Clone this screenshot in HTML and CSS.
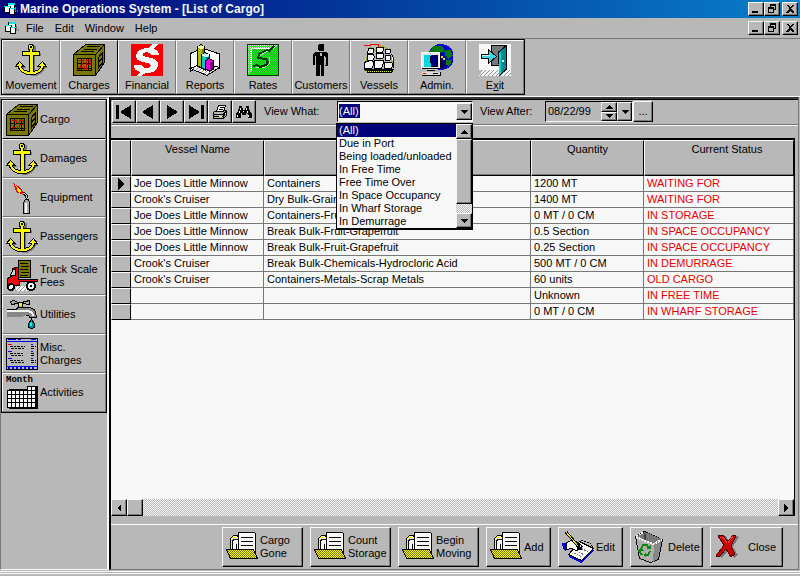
FILE: index.html
```html
<!DOCTYPE html>
<html lang="en">
<head>
<meta charset="utf-8">
<title>Marine Operations System</title>
<link rel="stylesheet" href="styles.css">
</head>
<body>
<svg class="sprites" aria-hidden="true">
  <defs>
    <pattern id="dither-yellow" width="2" height="2" patternUnits="userSpaceOnUse">
      <rect width="2" height="2" fill="#f8f800"/><path d="M0 0h1v1h-1zM1 1h1v1h-1z" fill="#787800"/>
    </pattern>
    <pattern id="dither-cream" width="2" height="2" patternUnits="userSpaceOnUse">
      <rect width="2" height="2" fill="#f8f8f8"/><path d="M0 0h1v1h-1zM1 1h1v1h-1z" fill="#f8f800"/>
    </pattern>
    <pattern id="dither-green" width="2" height="2" patternUnits="userSpaceOnUse">
      <rect width="2" height="2" fill="#00f800"/><path d="M0 0h1v1h-1zM1 1h1v1h-1z" fill="#28a828"/>
    </pattern>
    <pattern id="dither-pale" width="2" height="2" patternUnits="userSpaceOnUse">
      <rect width="2" height="2" fill="#00f800"/><path d="M0 0h1v1h-1zM1 1h1v1h-1z" fill="#d8d8d8"/>
    </pattern>
    <pattern id="dither-white" width="4" height="4" patternUnits="userSpaceOnUse">
      <rect width="4" height="4" fill="#f8f8f8"/><path d="M0 0h1v1h-1zM2 2h1v1h-1zM3 1h1v1h-1zM1 3h1v1h-1z" fill="#909090"/>
    </pattern>
  </defs>
  <symbol id="app" viewBox="0 0 16 16">
    <path d="M4.500 2.500h7v7h-7z" fill="#f8f8f8" stroke="#000"/><path d="M5 2h7v2H5z" fill="#00e8e8"/>
    <path d="M1.500 5.500h6v6h-6z" fill="#f8f8f8" stroke="#000"/><path d="M1 5h6v1H1z" fill="#00e8e8"/>
    <path d="M6.500 7.500h5v6h-5z" fill="#f8f8f8" stroke="#000"/><path d="M7 7h5v1H7z" fill="#00e8e8"/><path d="M12 6h1v5h-1zM14 9h1v2h-1z" fill="#787878"/>
  </symbol>
  <symbol id="anchor" viewBox="0 0 32 32">
    <path transform="translate(2 1)" fill="#787878" d="M14 5V1h5v5h-1v2h6v3h-6v17c4 0 7-2 7-5h-3l5-5 3 5h-2c-1 4-6 8-11 8S5 27 4 23H1l4-5 4 5H7c0 3 4 5 7 5V11H8V8h6z"/>
    <path fill="#f8f800" stroke="#000" d="M14 5.500L13 4.500V2L14.500 .5H17L18.500 2v2.500L17.500 5.500V7.500H24.500V11H18V27.500C22 27 25 25 25.500 22.500H22.500L27.500 17.500L31.500 22.500H29C28 27 22 31 16 31S4 27 3 22.500H.5L4.500 17.500L9 22.500H6.500C7 25 10 27 14 27.500V11H7.500V7.500H14z"/>
    <path d="M15 2h2v2h-2z" fill="#000"/>
  </symbol>
  <symbol id="crate" viewBox="0 0 32 32">
    <path fill="#787800" stroke="#000" d="M.5 10.500L12.500 .5H31.500V18.500L22.500 31.500H.5zM.5 10.500H22.500V31.500M22.500 10.500L31.500 .5"/>
    <path fill="#787800" stroke="#000" d="M4.500 14.500h14v12h-14z"/>
    <path stroke="#000" fill="none" d="M8 7.500h13M14 2.500h13M11 5.500h13M25 12.500v12M29 7.500v12M25 14l5-6M25 19l5-6M25 24l5-6"/>
    <path stroke="#000" d="M8.500 15v11M15.500 15v11M5 19.500h13M5 24.500h13"/>
    <path stroke="#c80000" fill="none" d="M6 16.500h5M10.500 17v2M9.500 19v2M7.500 21v2M6 23.500h4M13.500 15v11M17.500 16v5M13 16.500h4M14 20.500h4M5 25.500h2M11.500 22v4"/>
  </symbol>
  <symbol id="money" viewBox="0 0 32 32">
    <path fill="#f80000" d="M0 0h32v32H0z"/>
    <path fill="#f8f8f8" d="M22 0h5l-4 5c3 1 5 3 5 6h-8c0-3-7-4-8-1-1 2 3 3 8 4 5 1 8 4 7 8-1 5-6 7-12 7l-5 3H5l4-4c-4-1-6-3-6-7h8c0 4 8 4 9 1 0-2-3-3-8-4-5-1-8-3-7-7 1-4 5-7 12-7z"/>
  </symbol>
  <symbol id="report" viewBox="0 0 32 32">
    <path fill="#f8f8f8" stroke="#000" d="M1.500 9.500L13 4v18L1.500 27zM13 4L30.500 10v14L13 20z"/>
    <path fill="url(#dither-white)" stroke="#000" d="M1.500 24.500L13 19l17.500 4.500L18 31.500z"/>
    <path fill="#b8b800" stroke="#000" d="M8.500 3v19l3 1.500 4-1.500V3L12 .5z"/><path fill="#f8f8a0" d="M9 2h6v2l-3 1-3-1z"/><path d="M13 5h2v17h-2z" fill="#787800"/>
    <path fill="#00c8c8" stroke="#000" d="M12.500 11v13l4 2 4-2V11L16 8.500z"/><path fill="#c8f8f8" d="M13 10h7v2l-3 1-4-1z"/><path d="M17 13h3v11h-3z" fill="#007878"/>
    <path fill="#e800e8" stroke="#000" d="M16.500 17v8l4 2 4-2v-8L20 14.500z"/><path d="M21 18h3v7h-3z" fill="#780078"/>
  </symbol>
  <symbol id="rates" viewBox="0 0 32 32">
    <path fill="url(#dither-green)" stroke="#003800" d="M.5 .5h31v31H.5z"/>
    <path fill="url(#dither-pale)" d="M1 1h30l-4 4H5v22l-4 4z"/>
    <path fill="none" stroke="#f8f8f8" d="M4.500 27V4.500H26"/>
    <path fill="none" stroke="#b8e8b8" d="M9 23h9l4-3 1-7M12 12l9-5"/>
    <path fill="none" stroke="#003800" stroke-width="2" d="M6 22l4-1 3 2 6-2 2-3-2-3-8-1 1-4 8-4 2 1 5-5"/>
  </symbol>
  <symbol id="person" viewBox="0 0 32 32">
    <path d="M13 1l1-1h4l1 1v5l-1 1h-4l-1-1zM11 8h10l2 2v12h-3V12h-1v20h-3V21h-1v11h-4V12h-1v9H8V10z"/>
    <path fill="#b8b8b8" d="M15 9h2l-1 6zM10 13h1v8h-1zM20 13h1v8h-1z"/>
  </symbol>
  <symbol id="ship" viewBox="0 0 32 32">
    <path fill="none" stroke="#a8a800" d="M1 24L7 3l6 4 3-6 9 4 6 18M2 26h28M8 3v22M17 2v23M26 4v21"/>
    <path fill="none" stroke="#e80000" d="M1 1.500h7M7 .5h8v2"/>
    <path fill="#f8f8f8" stroke="#000" d="M5.500 4.500h5c1 2 0 4-1 5h-5zM4.500 10.500h6c1 2 1 5-1 6h-5zM1.500 18.500c3-2 8-2 9-1 0 3 0 5-2 7h-7zM13.500 3.500h7c0 2 0 3-1 5h-6zM13.500 9.500h7c1 2 0 4-1 5h-6zM11.500 16.500h9c0 4-1 6-2 8h-7zM22.500 5.500h5c1 2 0 3-1 4h-4zM22.500 11.500h5c1 2 0 4-1 5h-4zM21.500 18.500h7c2 2 1 4 0 6h-7zM28.500 10l2 4v10"/>
    <path fill="#000" d="M0 25h31l-1 3-3 1H4z"/><path stroke="#f8f800" stroke-dasharray="1 1" d="M3 27.500h25"/>
  </symbol>
  <symbol id="admin" viewBox="0 0 32 32">
    <circle cx="20" cy="13" r="13" fill="#0000d8"/><path fill="#000078" d="M15 14h8l4 5-3 6-8-1z"/>
    <path fill="#087808" d="M12 2h8l3 2 1 4h-4l-4 5-5-4H8zM24 7l5-2 3 7-5 3-3-3zM25 16h6l-2 6-4-1z"/><path fill="#e8e800" d="M20 12h2v2h2v2h-2v-2h-2z"/>
    <path fill="#e8e8e8" stroke="#f8f8f8" d="M.5 8.500h18v16H.5z"/><path fill="#000" d="M3 11h14v12H3zM19 9h1v16H1v-1h18z"/><path fill="#00d8e8" d="M3 11h7l-1 3 1 9H3z"/><path fill="#000078" d="M10 11h6v11h-6z"/>
    <path fill="#d8d8d8" d="M6 25h8v2H6zM1 28h18v3H1z"/><path fill="#000" d="M6 26h8v1H6zM1 31h19v1H1zM19 28h1v4h-1zM12 29h5v1h-5z"/><path fill="#f80000" d="M2 29h3v1H2z"/>
  </symbol>
  <symbol id="exit" viewBox="0 0 32 32">
    <path fill="#f8f8f8" d="M0 0h32v26H0z"/><path fill="url(#dither-white)" d="M4 26h28v6H0z"/><path fill="#787878" stroke="#000" d="M12.500 1.500h15v20h-15z"/>
    <path fill="#008890" stroke="#000" d="M19.500 8L27.500 1.500V25L20.500 31.500z"/><path fill="#00d8d8" d="M20 9l2-2v22l-2 2z"/><path fill="#f8f8f8" d="M23 16h2v2h-2z"/>
    <path fill="#38d8e8" stroke="#000" d="M2.500 10.500h7v-5l8 7-8 7v-5h-7z"/><path fill="#d0f8f8" d="M3 11h8v1H3z"/>
  </symbol>
  <symbol id="torch" viewBox="0 0 32 32">
    <path fill="#f80000" d="M7 1l5 3 3 2 3 5-3 1-5-2-1-4z"/><path fill="#f8f800" d="M9 3l4 3 2 3-1 2-3-2v-3z"/>
    <path fill="none" stroke="#000" stroke-width="3" d="M17 11c5 2 4 5 4 8"/><path fill="none" stroke="#d8d8d8" d="M17 11c5 2 4 5 4 8"/>
    <path fill="#a8a8a8" stroke="#000" d="M19.500 17.500h3l1 3v11h-6v-11z"/><path fill="#f8f8f8" d="M19 21h2v10h-2z"/>
  </symbol>
  <symbol id="truck" viewBox="0 0 32 32">
    <path fill="url(#dither-white)" d="M9 26h12v5H11z"/>
    <path fill="#787800" stroke="#000" d="M12.500 .5h12v17h-12z"/><path stroke="#000" d="M14 3.500h8M15 6.500h8M14 9.500h8M15 12.500h8M14 15.500h8"/>
    <path fill="#f80000" stroke="#000" d="M6.500 9l3-2h3v12.500h19v2H13v4H1.500v-7l4-2z"/><path fill="#b8d8d8" stroke="#000" d="M6.500 10.500l3-2v7h-5z"/>
    <circle cx="25" cy="26" r="4" fill="#f8f8f8" stroke="#000" stroke-width="2"/><circle cx="5" cy="27" r="3" fill="#f8f8f8" stroke="#000" stroke-width="2"/><path d="M24 25h2v2h-2z"/>
  </symbol>
  <symbol id="tap" viewBox="0 0 32 32">
    <path fill="#a8a8a8" stroke="#000" d="M4.500 2.500l3-1 5 2h3l8-2v4l-7-1h-5l-6 1zM12.500 5.500h4v4h-4z"/><path fill="#f8f800" d="M13 4h3v3h-3z"/>
    <path fill="#888" d="M1 10h10l2-2h8c5 0 9 3 9 7v3h-6c0-2-2-2-4-2-3 2-7 3-10 2H1z"/><path fill="none" stroke="#000" d="M1 10.500h9l2-2h9c5 0 9 2 9 7v3h-6c0-2-2-2-4-2"/><path fill="#f8f8f8" d="M1 11h20c5 0 7 3 7 6h-2c0-3-2-4-6-4H1z"/>
    <path fill="#008890" stroke="#000" d="M25.500 20l3 5v3l-2 1.500h-2l-2-1.500v-3z"/><path fill="#00f8f8" d="M25 23h1v4h-2v-2z"/>
  </symbol>
  <symbol id="ledger" viewBox="0 0 32 32">
    <path fill="#b8b8b8" stroke="#000" d="M.5 .5h31v31H.5z"/><path stroke="#0000d8" d="M2 1.500h28" stroke-dasharray="8 2 3 10"/><path stroke="#0000e8" d="M1 3.500h30M1 28.500h30"/><path stroke="#0000e8" stroke-width="2" stroke-dasharray="2 2" d="M2 30h28"/>
    <path stroke="#000" stroke-dasharray="3 1 2 1" d="M4 8.500h15M25 8.500h5M5 10.500h13M25 10.500h4M4 15.500h14M25 15.500h4M5 17.500h12M25 17.500h4M4 22.500h14M25 22.500h5M5 24.500h14M25 24.500h5"/><path stroke="#e80000" d="M2 6.500h4"/><path stroke="#0000e8" d="M2 13.500h4M2 20.500h4M25 6.500h2M25 13.500h2M25 20.500h2"/>
  </symbol>
  <symbol id="calendar" viewBox="0 0 32 32">
    <path fill="#000" d="M3 12h20V9h9v23H3z"/><path fill="#f8f8f8" stroke="#000" d="M1.500 13.500h20v-4h8v21h-28z"/>
    <path stroke="#000" d="M5.500 14v16M9.500 14v16M13.500 14v16M17.500 14v16M21.500 10v20M25.500 10v20M2 17.500h27M2 21.500h27M2 25.500h27M22 13.500h7"/>
  </symbol>
  <symbol id="folder" viewBox="0 0 32 32">
    <path fill="url(#dither-cream)" stroke="#000" d="M4.500 20V7.500l3-3h4l1 2h17v21"/>
    <path fill="#f8f8f8" stroke="#000" d="M6.500 19V9.500l2-1h6V19z"/><path d="M10 13h1v5h-1z"/>
    <path fill="#f8f8f8" stroke="#000" d="M12.500 19V1.500H28.500L29.500 2.500V20"/><path stroke="#000" d="M15 6.500h12M15 10.500h12M15 14.500h12"/>
    <path fill="url(#dither-yellow)" stroke="#000" d="M.5 18.500H27.500L31.500 27.500H4.500z"/>
  </symbol>
  <symbol id="edit" viewBox="0 0 32 32">
    <path fill="none" stroke="#0000d8" stroke-width="2" d="M7 25l12 6 12-12"/>
    <path fill="#f8f8f8" stroke="#000" d="M17.500 10.500l14 7-12 12-13-6z"/>
    <path fill="none" stroke="#787878" stroke-dasharray="2 1" d="M17 16l9 5M14 19l8 5M12 22l8 4"/>
    <path fill="none" stroke="#000" stroke-dasharray="2 1" d="M19 9l9 3 3 5"/><path fill="#0000d8" d="M0 12h4v8l-3-2z"/>
    <path fill="#f8f8f8" stroke="#000" d="M4.500 11.500l5-2 5 1 6 5-2 1-4-1 2 3-2 1-5-2-5 1z"/>
    <path fill="none" stroke="#000" stroke-width="3" d="M4 1l13 15 2 3"/><path fill="none" stroke="#e8d800" d="M4 1l12 14"/>
  </symbol>
  <symbol id="bin" viewBox="0 0 32 32">
    <path fill="#b0b0b0" stroke="#000" d="M1.500 5.500l9-5 18 8-4 20-8 3-11-4z"/><path fill="#787878" d="M3 5l8-4 17 7-9 5z"/><path fill="#404040" d="M10 2l2 1v8l-2-2z"/><path fill="#888" d="M20 13l8-4-4 19-5 3z"/>
    <path fill="none" stroke="#f8f8f8" stroke-width="2" stroke-dasharray="2 1" d="M2 5l8-4M2 6l17 7 9-4"/>
    <path fill="none" stroke="#088808" stroke-width="2" d="M7 18l2-4h4l2 4M16 20l-2 4h-3M8 24l-3-4 1-2"/><path fill="#088808" d="M12 18h5v-4zM12 21v6l-3-3zM4 20h6l-3-4z"/>
  </symbol>
  <symbol id="cross" viewBox="0 0 32 32">
    <path transform="translate(2 1)" fill="#787878" d="M4 5l6-1 4 7 6-7 3 1-6 10 5 8-4 3-5-8-7 8-3-1 8-11z"/>
    <path fill="#c80000" stroke="#580000" d="M4 5l5-1 5 7 5-7 3 1-5 10 4 8-4 3-5-8-7 8-3-1 8-11z"/><path fill="none" stroke="#f83838" d="M6 6h3l4 6M14 12l5-7"/>
  </symbol>
  <symbol id="printer" viewBox="0 0 16 16">
    <path fill="#b8b8b8" stroke="#000" d="M1.500 8.500l3-2h10v5l-3 3h-10z"/><path fill="#f8f8f8" stroke="#000" d="M6.500 1.500h7l-2 6h-7z"/><path stroke="#000" d="M8 3.500h4M7 5.500h4M2 10.500h9M11.500 14v-4l3-3M2 12.500h9"/><path fill="#f8f800" d="M7 12h3v1H7z"/>
  </symbol>
  <symbol id="binoculars" viewBox="0 0 16 16">
    <path d="M3 2h3v2h1v2h2V4h1V2h3v2l1 3 2 3v4h-4v-4h-1V9h-1v2H6V9H5v5H0v-4l2-3 1-3z"/><path stroke="#f8f8f8" d="M4.500 4v2M3.500 7v2M1.500 11v2M10.500 4v2M11.500 7v2M12.500 11v2M7.500 7v1"/>
  </symbol>
  <symbol id="first" viewBox="0 0 16 16"><path d="M0 1h3v14H0zM15 1v14L4 8z"/></symbol>
  <symbol id="prev" viewBox="0 0 16 16"><path d="M13 1v14L2 8z"/></symbol>
  <symbol id="next" viewBox="0 0 16 16"><path d="M3 1v14L14 8z"/></symbol>
  <symbol id="last" viewBox="0 0 16 16"><path d="M1 1v14L12 8zM13 1h3v14h-3z"/></symbol>
  <symbol id="min" viewBox="0 0 10 10"><path d="M1 7h6v2H1z"/></symbol>
  <symbol id="restore" viewBox="0 0 10 10"><path d="M3 0h6v6H7V5h1V2H4v1H3zM1 3h6v6H1zM2 5v3h4V5z" fill-rule="evenodd"/></symbol>
  <symbol id="shut" viewBox="0 0 10 10"><path d="M1 1h2l2 2 2-2h2L6 4v1l3 3v1H7L5 7 3 9H1V8l3-3V4L1 1z"/></symbol>
  <symbol id="up" viewBox="0 0 8 8"><path d="M4 2h0l4 4H0z"/></symbol>
  <symbol id="down" viewBox="0 0 8 8"><path d="M0 2h8L4 6z"/></symbol>
  <symbol id="left" viewBox="0 0 8 8"><path d="M6 0v8L2 4z"/></symbol>
  <symbol id="right" viewBox="0 0 8 8"><path d="M2 0v8l4-4z"/></symbol>
</svg>

<header>
  <div class="titlebar">
    <svg class="i16"><use href="#app"/></svg>
    <h1>Marine Operations System - [List of Cargo]</h1>
    <div class="winbtns">
      <button aria-label="Minimize"><svg class="i10"><use href="#min"/></svg></button>
      <button aria-label="Restore"><svg class="i10"><use href="#restore"/></svg></button>
      <button aria-label="Close window"><svg class="i10"><use href="#shut"/></svg></button>
    </div>
  </div>
  <div class="menubar">
    <svg class="i16"><use href="#app"/></svg>
    <nav class="menus"><a href="#file">File</a><a href="#edit-menu">Edit</a><a href="#window">Window</a><a href="#help">Help</a></nav>
    <div class="winbtns">
      <button aria-label="Minimize list"><svg class="i10"><use href="#min"/></svg></button>
      <button aria-label="Restore list"><svg class="i10"><use href="#restore"/></svg></button>
      <button aria-label="Close list"><svg class="i10"><use href="#shut"/></svg></button>
    </div>
  </div>
  <div class="toolbar">
    <div class="tools">
      <button><svg class="i32"><use href="#anchor"/></svg>Movement</button>
      <button class="group-end"><svg class="i32"><use href="#crate"/></svg>Charges</button>
      <button><svg class="i32"><use href="#money"/></svg>Financial</button>
      <button><svg class="i32"><use href="#report"/></svg>Reports</button>
      <button><svg class="i32"><use href="#rates"/></svg>Rates</button>
      <button><svg class="i32"><use href="#person"/></svg>Customers</button>
      <button><svg class="i32"><use href="#ship"/></svg>Vessels</button>
      <button><svg class="i32"><use href="#admin"/></svg>Admin.</button>
      <button><svg class="i32"><use href="#exit"/></svg><span>E<u>x</u>it</span></button>
    </div>
  </div>
</header>

<div class="workspace">
  <aside class="sidebar">
    <div class="side-list">
      <button class="current"><svg class="i32"><use href="#crate"/></svg>Cargo</button>
      <button><svg class="i32"><use href="#anchor"/></svg>Damages</button>
      <button><svg class="i32"><use href="#torch"/></svg>Equipment</button>
      <button><svg class="i32"><use href="#anchor"/></svg>Passengers</button>
      <button><svg class="i32"><use href="#truck"/></svg><span>Truck Scale<br>Fees</span></button>
      <button><svg class="i32"><use href="#tap"/></svg>Utilities</button>
      <button><svg class="i32"><use href="#ledger"/></svg><span>Misc.<br>Charges</span></button>
      <button><span class="month"><svg class="i32"><use href="#calendar"/></svg><small>Month</small></span>Activities</button>
    </div>
  </aside>

  <main class="panel">
    <div class="navbar">
      <div class="records">
        <button aria-label="First"><svg class="i16"><use href="#first"/></svg></button>
        <button aria-label="Previous"><svg class="i16"><use href="#prev"/></svg></button>
        <button aria-label="Next"><svg class="i16"><use href="#next"/></svg></button>
        <button aria-label="Last"><svg class="i16"><use href="#last"/></svg></button>
        <button aria-label="Print"><svg class="i16"><use href="#printer"/></svg></button>
        <button aria-label="Find"><svg class="i16"><use href="#binoculars"/></svg></button>
      </div>
      <label class="lbl-what" for="what">View What:</label>
      <div class="combo">
        <select id="what"><option>(All)</option><option>Due in Port</option><option>Being loaded/unloaded</option><option>In Free Time</option><option>Free Time Over</option><option>In Space Occupancy</option><option>In Wharf Storage</option><option>In Demurrage</option></select>
        <span class="arrow raised"><svg class="i8"><use href="#down"/></svg></span>
        <div class="popup">
          <ul role="listbox" aria-label="View What">
            <li role="option" aria-selected="true">(All)</li><li role="option">Due in Port</li><li role="option">Being loaded/unloaded</li><li role="option">In Free Time</li><li role="option">Free Time Over</li><li role="option">In Space Occupancy</li><li role="option">In Wharf Storage</li><li role="option">In Demurrage</li>
          </ul>
          <div class="vscroll">
            <button class="raised" aria-label="Scroll up"><svg class="i8"><use href="#up"/></svg></button>
            <span class="thumb raised"></span>
            <button class="raised" aria-label="Scroll down"><svg class="i8"><use href="#down"/></svg></button>
          </div>
        </div>
      </div>
      <label class="lbl-after" for="after">View After:</label>
      <div class="datebox">
        <input id="after" type="text" value="08/22/99">
        <div class="spin">
          <button class="raised" aria-label="Later"><svg class="i8"><use href="#up"/></svg></button>
          <button class="raised" aria-label="Earlier"><svg class="i8"><use href="#down"/></svg></button>
        </div>
        <button class="drop raised" aria-label="Open calendar"><svg class="i8"><use href="#down"/></svg></button>
      </div>
      <button class="more raised">...</button>
    </div>

    <div class="gridbox">
      <table>
        <colgroup><col class="c-mark"><col class="c-vessel"><col class="c-cargo"><col class="c-qty"><col></colgroup>
        <thead><tr><th></th><th>Vessel Name</th><th></th><th>Quantity</th><th class="status-head">Current Status</th></tr></thead>
        <tbody>
          <tr><th><svg class="i12"><use href="#right"/></svg></th><td>Joe Does Little Minnow</td><td>Containers</td><td>1200 MT</td><td>WAITING FOR</td></tr>
          <tr><th></th><td>Crook's Cruiser</td><td>Dry Bulk-Grain</td><td>1400 MT</td><td>WAITING FOR</td></tr>
          <tr><th></th><td>Joe Does Little Minnow</td><td>Containers-Fruit</td><td>0 MT / 0 CM</td><td>IN STORAGE</td></tr>
          <tr><th></th><td>Joe Does Little Minnow</td><td>Break Bulk-Fruit-Grapefruit</td><td>0.5 Section</td><td>IN SPACE OCCUPANCY</td></tr>
          <tr><th></th><td>Joe Does Little Minnow</td><td>Break Bulk-Fruit-Grapefruit</td><td>0.25 Section</td><td>IN SPACE OCCUPANCY</td></tr>
          <tr><th></th><td>Crook's Cruiser</td><td>Break Bulk-Chemicals-Hydrocloric Acid</td><td>500 MT / 0 CM</td><td>IN DEMURRAGE</td></tr>
          <tr><th></th><td>Crook's Cruiser</td><td>Containers-Metals-Scrap Metals</td><td>60 units</td><td>OLD CARGO</td></tr>
          <tr><th></th><td></td><td></td><td>Unknown</td><td>IN FREE TIME</td></tr>
          <tr><th></th><td></td><td></td><td>0 MT / 0 CM</td><td>IN WHARF STORAGE</td></tr>
        </tbody>
      </table>
      <div class="hscroll">
        <button class="raised" aria-label="Scroll left"><svg class="i8"><use href="#left"/></svg></button>
        <span class="thumb raised"></span>
        <button class="raised end" aria-label="Scroll right"><svg class="i8"><use href="#right"/></svg></button>
      </div>
    </div>

    <div class="actions">
      <button class="wide"><svg class="i32"><use href="#folder"/></svg><span>Cargo<br>Gone</span></button>
      <button class="wide"><svg class="i32"><use href="#folder"/></svg><span>Count<br>Storage</span></button>
      <button class="wide"><svg class="i32"><use href="#folder"/></svg><span>Begin<br>Moving</span></button>
      <button class="small"><svg class="i32"><use href="#folder"/></svg>Add</button>
      <button class="small"><svg class="i32"><use href="#edit"/></svg>Edit</button>
      <button class="mid"><svg class="i32"><use href="#bin"/></svg>Delete</button>
      <button class="mid"><svg class="i32"><use href="#cross"/></svg>Close</button>
    </div>
  </main>
</div>
<footer></footer>
</body>
</html>
```
FILE: styles.css
```css
:root {
  --face: #b8b8b8;
  --light: #f8f8f8;
  --shade: #787878;
  --navy: #000078;
}

* { box-sizing: border-box; }

body {
  margin: 0;
  min-height: 100vh;
  display: flex;
  flex-direction: column;
  background: var(--face);
  color: #000;
  font: 11px/13px "Liberation Sans", Arial, sans-serif;
}

button, input, select { font: inherit; color: inherit; margin: 0; }
button { padding: 0; border: 0; background: var(--face); display: flex; align-items: center; }

svg { display: block; flex: none; shape-rendering: crispEdges; }
.sprites { position: absolute; width: 0; height: 0; }
.i8 { width: 8px; height: 8px; }
.i10 { width: 10px; height: 10px; }
.i12 { width: 12px; height: 12px; }
.i16 { width: 16px; height: 16px; }
.i32 { width: 32px; height: 32px; }

.raised {
  background: var(--face);
  border: 1px solid;
  border-color: var(--light) #000 #000 var(--light);
  box-shadow: inset -1px -1px var(--shade);
  display: flex;
  align-items: center;
  justify-content: center;
}

/* Title and menu */
.titlebar {
  display: flex;
  align-items: center;
  height: 18px;
  padding: 0 2px 0 3px;
  gap: 1px;
  background: linear-gradient(90deg, #000078, #0880c8);
  color: var(--light);
}
h1 { margin: 0; font-size: 12px; line-height: 16px; font-weight: bold; }
.winbtns { margin-left: auto; display: flex; }
.winbtns button {
  width: 16px;
  height: 14px;
  justify-content: center;
  border: 1px solid;
  border-color: var(--light) #000 #000 var(--light);
  box-shadow: inset -1px -1px var(--shade);
}
.winbtns button:last-child { margin-left: 2px; }
.menubar { display: flex; align-items: center; height: 20px; padding: 0 2px 0 4px; gap: 6px; }
.menus { display: flex; gap: 11px; }
.menus a { color: inherit; text-decoration: none; }

/* Main toolbar */
.toolbar {
  border-top: 1px solid var(--shade);
  border-bottom: 1px solid var(--light);
  padding-bottom: 1px;
}
.tools {
  display: flex;
  width: max-content;
  margin-left: 1px;
  border: 1px solid #000;
}
.tools button {
  width: 58px;
  height: 54px;
  padding-top: 2px;
  flex-direction: column;
  justify-content: center;
  gap: 3px;
  border: 1px solid;
  border-color: var(--light) var(--shade) var(--shade) var(--light);
}
.tools .group-end { border-right-color: #000; }

/* Sidebar */
.workspace { flex: 1; display: flex; }
.sidebar {
  flex: none;
  width: 109px;
  padding-top: 1px;
  border: 1px solid;
  border-color: var(--shade) var(--light) var(--light) var(--shade);
  border-right-width: 2px;
}
.side-list { border: 1px solid #000; }
.side-list button {
  width: 100%;
  height: 39px;
  padding-left: 3px;
  gap: 2px;
  text-align: left;
  border: 1px solid;
  border-color: var(--light) var(--shade) var(--shade) var(--light);
}
.side-list .current { border-bottom-color: #000; }
.month { position: relative; }
.month small {
  position: absolute;
  top: -1px;
  left: 0;
  font: bold 9px/9px "Liberation Mono", monospace;
}

/* Working panel */
.panel {
  flex: 1;
  min-width: 0;
  display: flex;
  flex-direction: column;
  margin-right: 1px;
  border: 1px solid var(--shade);
  border-top: 2px solid #383838;
  border-left: 2px solid #000;
}
.navbar {
  display: flex;
  align-items: center;
  height: 27px;
  padding: 0 0 2px 1px;
  border-top: 1px solid #000;
  border-bottom: 1px solid var(--light);
  box-shadow: inset 0 -1px var(--shade);
}
.records { display: flex; }
.records button {
  width: 24px;
  height: 23px;
  justify-content: center;
  border: 1px solid;
  border-color: var(--light) #000 #000 var(--light);
  box-shadow: inset -1px -1px var(--shade);
}
.lbl-what { margin-left: 8px; width: 73px; }
.combo { position: relative; width: 136px; height: 21px; display: flex; }
.combo select {
  appearance: none;
  width: 100%;
  padding: 0 18px 0 1px;
  border: 1px solid;
  border-color: #000 var(--light) var(--light) #000;
  border-radius: 0;
  background: linear-gradient(var(--navy), var(--navy)) 1px 2px / 21px 14px no-repeat var(--light);
  color: var(--light);
}
.arrow { position: absolute; right: 1px; top: 2px; width: 16px; height: 17px; pointer-events: none; }
.popup {
  position: absolute;
  z-index: 1;
  top: 22px;
  left: -1px;
  width: 137px;
  height: 107px;
  display: flex;
  border: 1px solid #000;
  border-bottom-width: 2px;
  background: var(--light);
  overflow: hidden;
}
.popup ul { flex: 1; margin: 0; padding: 0; list-style: none; }
.popup li { padding-left: 2px; white-space: nowrap; }
.popup li[aria-selected="true"] { background: var(--navy); color: var(--light); }
.vscroll {
  width: 16px;
  display: flex;
  flex-direction: column;
  background: repeating-conic-gradient(var(--face) 0 25%, var(--light) 0 50%) 0 0 / 2px 2px;
}
.vscroll button { height: 15px; }
.vscroll .thumb { height: 65px; margin-bottom: auto; }
.lbl-after { margin-left: 7px; width: 65px; }
.datebox {
  display: flex;
  height: 21px;
  width: 88px;
  border: 1px solid;
  border-color: #000 var(--light) var(--light) #000;
}
.datebox input { flex: 1; min-width: 0; border: 0; padding: 0 2px; background: var(--face); }
.spin { width: 16px; display: flex; flex-direction: column; }
.spin button { flex: 1; min-height: 0; }
.drop { width: 15px; }
.more { width: 20px; height: 21px; }

/* Cargo grid */
.gridbox {
  flex: 1;
  display: flex;
  flex-direction: column;
  margin: 12px 3px 8px 0;
  border-top: 2px solid #000;
  border-right: 1px solid #000;
  background: var(--light);
}
table { width: 100%; table-layout: fixed; border-collapse: separate; border-spacing: 0; }
.c-mark { width: 20px; }
.c-vessel { width: 133px; }
.c-cargo { width: 267px; }
.c-qty { width: 113px; }
th {
  padding: 0;
  font-weight: normal;
  background: var(--face);
  border: 1px solid;
  border-color: var(--light) #000 #000 var(--light);
}
thead th { height: 36px; padding-top: 2px; vertical-align: top; box-shadow: inset 0 -1px var(--shade); }
thead .status-head { padding-left: 16px; }
tbody th svg { margin: 0 auto; }
td {
  height: 16px;
  padding: 1px 3px;
  white-space: nowrap;
  overflow: hidden;
  border: 1px solid var(--shade);
  border-width: 0 1px 1px 0;
}
td:last-child { color: #e80000; }
.hscroll {
  display: flex;
  height: 17px;
  margin-top: auto;
  background: repeating-conic-gradient(var(--face) 0 25%, var(--light) 0 50%) 0 0 / 2px 2px;
}
.hscroll button, .hscroll .thumb { width: 16px; }
.hscroll .end { margin-left: auto; }

/* Record actions */
.actions {
  display: flex;
  justify-content: flex-end;
  gap: 7px;
  padding: 2px 15px 2px 0;
  border-top: 1px solid var(--light);
}
.actions button {
  height: 40px;
  padding-left: 3px;
  gap: 2px;
  text-align: left;
  border: 1px solid;
  border-color: var(--light) #000 #000 var(--light);
  box-shadow: inset -1px -1px var(--shade);
}
.wide { width: 81px; }
.small { width: 65px; }
.mid { width: 73px; }

footer {
  height: 3px;
  margin: 1px 0 2px;
  border: 1px solid var(--light);
  border-width: 1px 0;
}
```
